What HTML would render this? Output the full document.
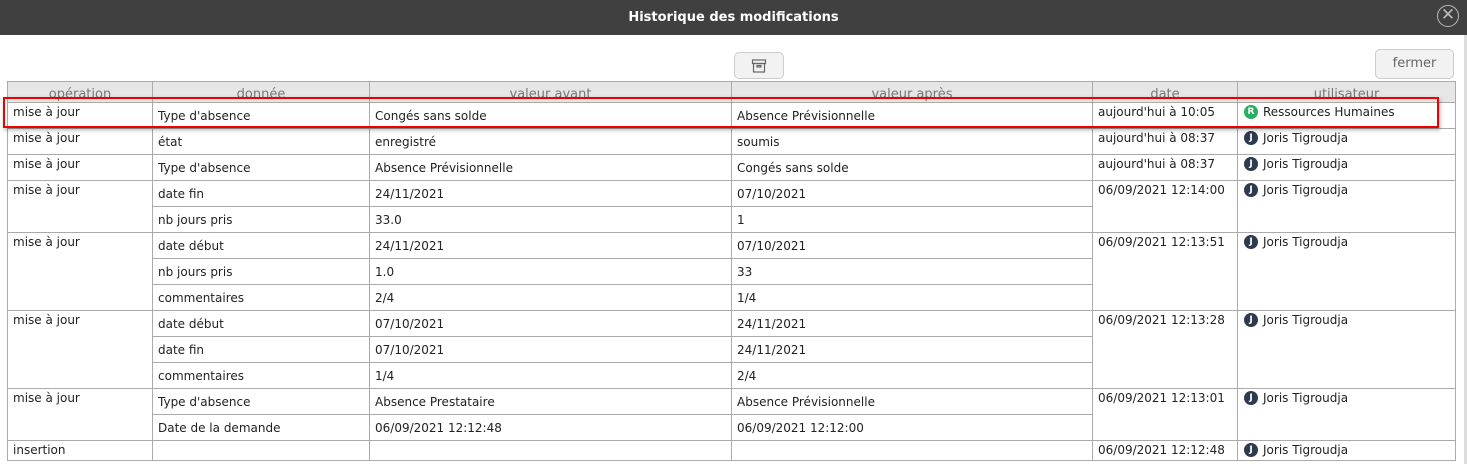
<!DOCTYPE html>
<html><head><meta charset="utf-8"><style>
*{margin:0;padding:0;box-sizing:border-box}
body{width:1467px;height:464px;overflow:hidden;background:#fff;font-family:"DejaVu Sans",Verdana,sans-serif;font-size:12px;color:#222;position:relative}
.bar{position:absolute;left:0;top:0;width:1467px;height:35px;background:#404040;color:#fff;font-weight:bold;font-size:13px;text-align:center;line-height:35px}
.x{position:absolute;left:1437px;top:5px;width:22px;height:22px;border:1.5px solid #bbb;border-radius:50%;color:#bbb;text-align:center;line-height:19px;font-size:17px;font-weight:normal}
.edge{position:absolute;left:1464px;top:35px;width:3px;height:429px;background:#ddd}
.btn{position:absolute;border:1px solid #ccc;border-radius:5px;background:#f2f2f2;color:#666;text-align:center}
table{position:absolute;left:7px;top:81px;width:1448px;border-collapse:collapse;table-layout:fixed}
td,th{border:1px solid #aaa;height:26px;padding:0 5px;white-space:nowrap;overflow:hidden;vertical-align:middle;line-height:14px}
th{height:21px;background:#e6e6e6;font-weight:normal;color:#777;font-size:13px;padding:0}
th div{height:20px;overflow:hidden;line-height:26px;text-align:center}
td.t{vertical-align:top;padding-top:2px}
tr.last td{height:20px}
.av{display:inline-block;width:14px;height:14px;border-radius:50%;background:#2e3a4f;color:#fff;font-size:9px;font-weight:bold;text-align:center;line-height:14px;vertical-align:top;margin-right:5px;margin-left:1px}
.g{background:#27ae60}
.red{position:absolute;left:3px;top:97px;width:1436px;height:31px;border:2px solid #e00;box-shadow:1px 2px 4px rgba(0,0,0,.3)}
</style></head><body>
<div class="bar">Historique des modifications<div class="x">✕</div></div>
<div class="edge"></div>
<div class="btn" style="left:734px;top:52px;width:50px;height:27px">
<svg width="16" height="16" viewBox="0 0 16 16" style="margin-top:5px" fill="none" stroke="#666" stroke-width="1.2"><rect x="1.5" y="2" width="13" height="3.5"/><rect x="2.5" y="5.5" width="11" height="8.5"/><rect x="6" y="7.5" width="4" height="1.5"/></svg></div>
<div class="btn" style="left:1375px;top:49px;width:79px;height:30px;line-height:28px;font-size:13px">fermer</div>
<table>
<colgroup><col style="width:145px"><col style="width:217px"><col style="width:362px"><col style="width:361px"><col style="width:145px"><col style="width:218px"></colgroup>
<tr><th><div>opération</div></th><th><div>donnée</div></th><th><div>valeur avant</div></th><th><div>valeur après</div></th><th><div>date</div></th><th><div>utilisateur</div></th></tr>
<tr><td class="t">mise à jour</td><td>Type d'absence</td><td>Congés sans solde</td><td>Absence Prévisionnelle</td><td class="t">aujourd'hui à 10:05</td><td class="t"><span class="av g">R</span>Ressources Humaines</td></tr>
<tr><td class="t">mise à jour</td><td>état</td><td>enregistré</td><td>soumis</td><td class="t">aujourd'hui à 08:37</td><td class="t"><span class="av">J</span>Joris Tigroudja</td></tr>
<tr><td class="t">mise à jour</td><td>Type d'absence</td><td>Absence Prévisionnelle</td><td>Congés sans solde</td><td class="t">aujourd'hui à 08:37</td><td class="t"><span class="av">J</span>Joris Tigroudja</td></tr>
<tr><td class="t" rowspan="2">mise à jour</td><td>date fin</td><td>24/11/2021</td><td>07/10/2021</td><td class="t" rowspan="2">06/09/2021 12:14:00</td><td class="t" rowspan="2"><span class="av">J</span>Joris Tigroudja</td></tr>
<tr><td>nb jours pris</td><td>33.0</td><td>1</td></tr>
<tr><td class="t" rowspan="3">mise à jour</td><td>date début</td><td>24/11/2021</td><td>07/10/2021</td><td class="t" rowspan="3">06/09/2021 12:13:51</td><td class="t" rowspan="3"><span class="av">J</span>Joris Tigroudja</td></tr>
<tr><td>nb jours pris</td><td>1.0</td><td>33</td></tr>
<tr><td>commentaires</td><td>2/4</td><td>1/4</td></tr>
<tr><td class="t" rowspan="3">mise à jour</td><td>date début</td><td>07/10/2021</td><td>24/11/2021</td><td class="t" rowspan="3">06/09/2021 12:13:28</td><td class="t" rowspan="3"><span class="av">J</span>Joris Tigroudja</td></tr>
<tr><td>date fin</td><td>07/10/2021</td><td>24/11/2021</td></tr>
<tr><td>commentaires</td><td>1/4</td><td>2/4</td></tr>
<tr><td class="t" rowspan="2">mise à jour</td><td>Type d'absence</td><td>Absence Prestataire</td><td>Absence Prévisionnelle</td><td class="t" rowspan="2">06/09/2021 12:13:01</td><td class="t" rowspan="2"><span class="av">J</span>Joris Tigroudja</td></tr>
<tr><td>Date de la demande</td><td>06/09/2021 12:12:48</td><td>06/09/2021 12:12:00</td></tr>
<tr class="last"><td class="t">insertion</td><td></td><td></td><td></td><td class="t">06/09/2021 12:12:48</td><td class="t"><span class="av">J</span>Joris Tigroudja</td></tr>
</table>
<div class="red"></div>
</body></html>
